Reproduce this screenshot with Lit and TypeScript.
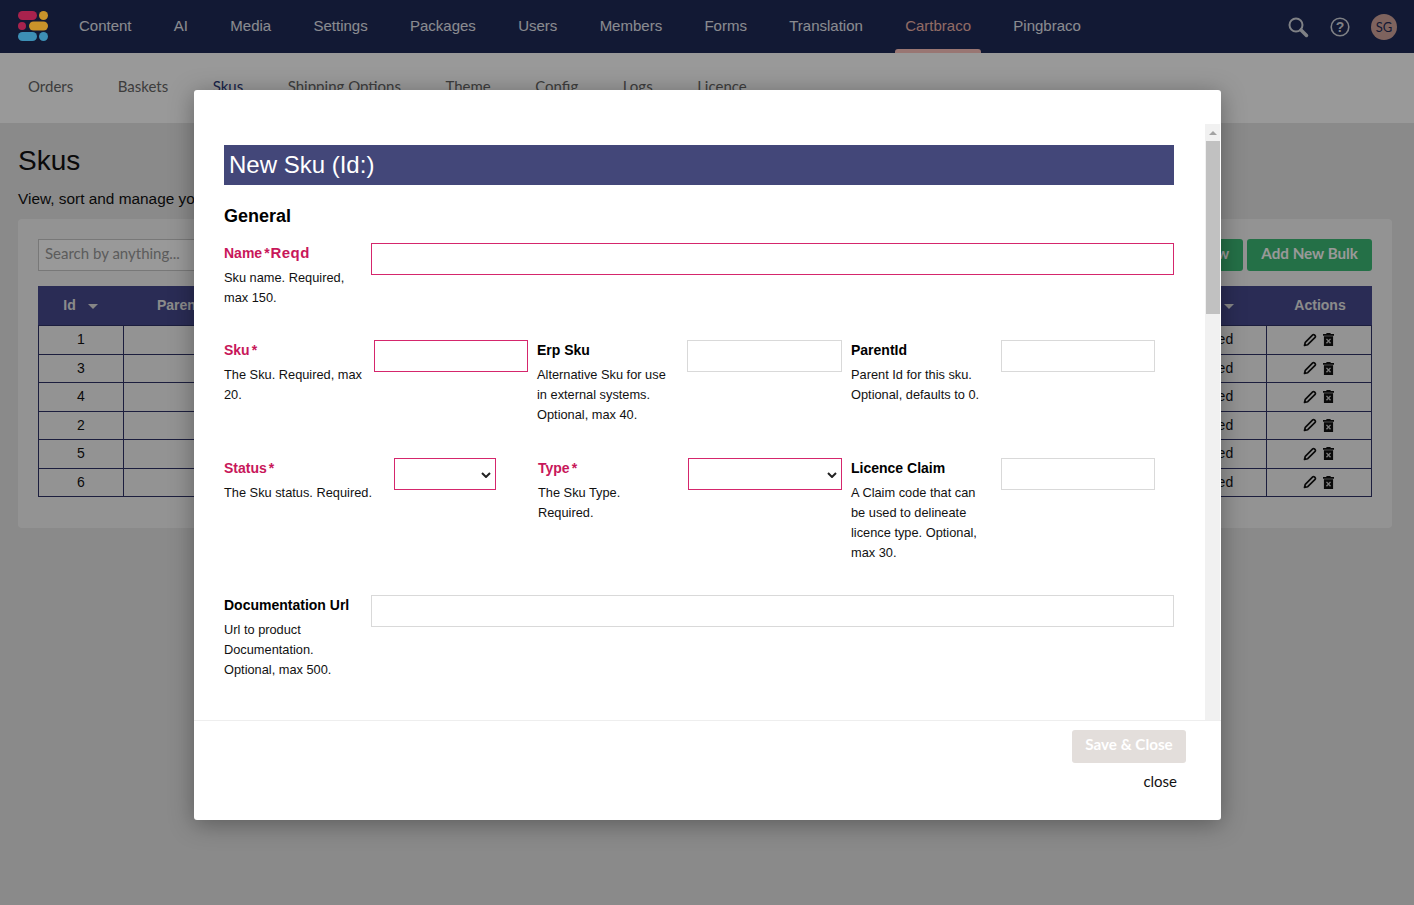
import { LitElement, html, css, svg } from "lit";
import { customElement } from "lit/decorators.js";

const NAV = ["Content","AI","Media","Settings","Packages","Users","Members","Forms","Translation","Cartbraco","Pingbraco"];
const SUB = ["Orders","Baskets","Skus","Shipping Options","Theme","Config","Logs","Licence"];
const IDS = [1,3,4,2,5,6];

const pencil = svg`<svg class="ico" viewBox="0 0 14 14" width="14" height="14"><path d="M1.500 12.500l.8-3.200 7.400-7.400a1.200 1.200 0 0 1 1.700 0l.7.7a1.200 1.200 0 0 1 0 1.700l-7.400 7.400z" fill="none" stroke="#111" stroke-width="1.700" stroke-linejoin="round"/></svg>`;
const trash = svg`<svg class="ico" viewBox="0 0 12 14" width="11" height="13"><path d="M4 0h4l.6 1H12v2H0V1h3.400zM1 3.500h10V14H1z" fill="#111"/><path d="M3.800 6.300l4.400 4.800M8.200 6.300l-4.400 4.800" stroke="#ccc" stroke-width="1.500"/></svg>`;

@customElement("app-root")
export class AppRoot extends LitElement {
  static styles = css`
    :host { display: block; position: relative; width: 1414px; height: 905px; overflow: hidden; background: #e6e6e6; font-family: "Liberation Sans", Arial, sans-serif; color: #111; }
    .topbar { height: 53px; background: #1f2b58; display: flex; align-items: stretch; padding-left: 18px; box-sizing: border-box; }
    .logo { align-self: center; width: 30px; height: 30px; margin: 0 31px 1px 0; position: relative; z-index: 1; }
    .nav { display: flex; gap: 42.300px; flex: 1; }
    .nav a { position: relative; font-size: 15px; line-height: 52px; color: #e6e8f0; }
    .nav a.active { color: #f0b4aa; }
    .nav a.active::after { content: ""; position: absolute; left: -10px; right: -10px; bottom: 0; height: 4px; background: #ffc5c0; border-radius: 3px 3px 0 0; }
    .tools { display: flex; align-items: center; gap: 20px; padding-right: 17px; }
    .avatar { width: 26px; height: 26px; border-radius: 50%; background: #d3a69d; color: #1f2b58; font: 13px/26px "Lato", sans-serif; text-align: center; }
    .subnav { height: 70px; background: #fff; display: flex; gap: 44.500px; align-items: center; padding: 0 0 4px 28px; box-sizing: border-box; font: 15px "Lato", sans-serif; color: #666; }
    .subnav a.active { color: #2b3a7a; }
    .content { padding: 0 22px 0 18px; }
    h1 { margin: 0; padding-top: 23px; font-size: 28px; line-height: 30px; font-weight: 400; }
    .lead { font-size: 15.400px; line-height: 20px; margin: 13px 0 10px; }
    .card { background: #f6f6f6; border-radius: 4px; padding: 20px; height: 309px; box-sizing: border-box; }
    .tools-row { display: flex; gap: 4px; margin-bottom: 15px; }
    .search { flex: 1; height: 32px; box-sizing: border-box; border: 1px solid #c8c8c8; background: #fff; padding: 0 6px; font: 15px/26px "Lato", sans-serif; color: #999; margin-right: 12px; }
    .btn { height: 32px; padding: 0 14px; border-radius: 3px; background: #3dbb77; color: #fff; font: 700 15.200px/29px "Lato", sans-serif; }
    .table { border: 1px solid #2f3368; border-top: 0; }
    .thead, .row { display: grid; grid-template-columns: 85px 1fr 118px 104px; }
    .thead { height: 39px; background: #464a8e; color: #e8e8e8; font-weight: 700; font-size: 14px; line-height: 39px; margin: 0 -1px; }
    .th { text-align: center; display: flex; justify-content: center; align-items: center; gap: 12px; }
    .th.left { justify-content: flex-start; padding-left: 34px; }
    .th.status { justify-content: flex-start; padding-left: 0; gap: 0; }
    .th.status span { width: 74px; }
    .caret { width: 0; height: 0; border: 5px solid transparent; border-top-color: #e0e0e0; border-bottom: 0; margin-top: 2px; }
    .row { height: 28.500px; box-sizing: border-box; border-top: 1px solid #2f3368; font-size: 14px; line-height: 27px; }
    .row:first-of-type { border-top: 0; }
    .td { text-align: center; border-right: 1px solid #2f3368; }
    .td:last-child { border-right: 0; display: flex; justify-content: center; align-items: center; gap: 6px; padding-right: 2px; }
    .ico { display: block; }

    .overlay { position: absolute; inset: 0; background: rgba(0,0,0,.4); }
    .modal { position: absolute; left: 194px; top: 90px; width: 1027px; height: 730px; background: #fff; border-radius: 3px; box-shadow: 0 4px 24px rgba(0,0,0,.35); display: flex; flex-direction: column; }
    .main { height: 596px; margin-top: 34px; display: flex; padding-right: 1px; }
    .body { flex: 1; min-width: 0; overflow: hidden; padding: 21px 31px 0 30px; box-sizing: border-box; }
    .scrollbar { width: 15px; background: #f1f1f1; flex: none; display: flex; flex-direction: column; align-items: center; }
    .arrow { height: 17px; display: flex; align-items: center; justify-content: center; }
    .arrow i { width: 0; height: 0; border: 4px solid transparent; border-bottom-color: #a3a3a3; border-top: 0; }
    .thumb { width: 14px; height: 173px; background: #c1c1c1; }
    .title { height: 40px; background: #434779; color: #fff; font-size: 24px; line-height: 39px; padding-left: 5px; margin: 0; font-weight: 400; }
    h2 { margin: 21px 0 0; font-size: 18px; line-height: 20px; font-weight: 700; color: #000; }
    .f { display: grid; }
    .r1 { grid-template-columns: 147px 803px; margin-top: 17px; }
    .r2 { grid-template-columns: 150px 154px 159px 155px 159px 154px; margin-top: 32px; }
    .r3 { grid-template-columns: 170px 102px 192px 154px 159px 154px; margin-top: 33px; }
    .r4 { grid-template-columns: 147px 803px; margin-top: 32px; }
    .lbl { font-size: 14px; line-height: 20px; font-weight: 700; color: #000; }
    .lbl i { font-style: normal; margin-left: 2px; }
    .lbl b { font-size: 15px; letter-spacing: .4px; margin-left: 1px; }
    .req .lbl { color: #c8175a; }
    .pad { padding-left: 9px; }
    .pad2 { padding-left: 42px; }
    .help { font-size: 12.800px; line-height: 20px; margin-top: 5px; color: #111; }
    .inp { height: 32px; box-sizing: border-box; border: 1px solid #d9d9d9; background: #fff; }
    .inp.bad { border: 1.500px solid #d5266c; }
    .sel { position: relative; }
    .chev { position: absolute; right: 4px; top: 13px; display: block; }
    .footer { flex: 1; border-top: 1px solid #eee; display: flex; flex-direction: column; align-items: flex-end; padding: 9px 35px 0 0; }
    .save { width: 114px; height: 33px; box-sizing: border-box; background: #e3dedb; color: #fff; border-radius: 3px; text-align: center; font: 700 15.200px/29px "Lato", sans-serif; }
    .close { font: 15px/20px "Lato", sans-serif; margin: 8px 9px 0 0; color: #111; }
  `;

  private field(label: unknown, help: string[], cls = "") {
    return html`<div class=${cls}>
      <div class="lbl">${label}</div>
      <div class="help">${help.map((l, i) => html`${i ? html`<br />` : ""}${l}`)}</div>
    </div>`;
  }

  private select() {
    return html`<svg class="chev" viewBox="0 0 10 6" width="10" height="6"><path d="M1 1l4 4 4-4" fill="none" stroke="#222" stroke-width="2"/></svg>`;
  }

  render() {
    return html`
      <header class="topbar">
        <svg class="logo" viewBox="0 0 30 30">
          <rect x="0" y="0" width="19" height="9" rx="4.500" fill="#a8224d"/>
          <circle cx="25.500" cy="4.500" r="4.500" fill="#c8932a"/>
          <circle cx="4" cy="15" r="4" fill="#a8224d"/>
          <rect x="11" y="10.500" width="19" height="9" rx="4.500" fill="#c8932a"/>
          <rect x="0" y="21" width="19" height="9" rx="4.500" fill="#3d8fb5"/>
          <circle cx="25.500" cy="25.500" r="4.500" fill="#3d8fb5"/>
        </svg>
        <nav class="nav">${NAV.map((n) => html`<a class=${n === "Cartbraco" ? "active" : ""}>${n}</a>`)}</nav>
        <div class="tools">
          <svg viewBox="0 0 22 22" width="22" height="22"><circle cx="9" cy="9" r="6.500" fill="none" stroke="#d4d7de" stroke-width="2"/><path d="M14 14l5.500 5.500" stroke="#d4d7de" stroke-width="3.500" stroke-linecap="round"/></svg>
          <svg viewBox="0 0 22 22" width="22" height="22"><circle cx="11" cy="11" r="8.800" fill="none" stroke="#d4d7de" stroke-width="1.600"/><text x="11" y="16" text-anchor="middle" font-family="Liberation Sans" font-weight="700" font-size="14" fill="#d4d7de">?</text></svg>
          <div class="avatar">SG</div>
        </div>
      </header>
      <div class="subnav">${SUB.map((s) => html`<a class=${s === "Skus" ? "active" : ""}>${s}</a>`)}</div>
      <div class="content">
        <h1>Skus</h1>
        <p class="lead">View, sort and manage your skus</p>
        <div class="card">
          <div class="tools-row">
            <div class="search">Search by anything...</div>
            <div class="btn">Add New</div>
            <div class="btn">Add New Bulk</div>
          </div>
          <div class="table">
            <div class="thead">
              <div class="th"><span>Id</span><i class="caret"></i></div>
              <div class="th left"><span>Parent</span></div>
              <div class="th status"><span>Status</span><i class="caret"></i></div>
              <div class="th"><span>Actions</span></div>
            </div>
            ${IDS.map((id) => html`<div class="row">
              <div class="td">${id}</div><div class="td"></div><div class="td">Enabled</div>
              <div class="td">${pencil}${trash}</div>
            </div>`)}
          </div>
        </div>
      </div>
      <div class="overlay"></div>
      <div class="modal">
        <div class="main">
          <div class="body">
            <h3 class="title">New Sku (Id:)</h3>
            <h2>General</h2>
            <div class="f r1 req">
              ${this.field(html`Name<i>*</i><b>Reqd</b>`, ["Sku name. Required,", "max 150."])}
              <div class="inp bad"></div>
            </div>
            <div class="f r2">
              ${this.field(html`Sku<i>*</i>`, ["The Sku. Required, max", "20."], "req")}
              <div class="inp bad"></div>
              ${this.field("Erp Sku", ["Alternative Sku for use", "in external systems.", "Optional, max 40."], "pad")}
              <div class="inp"></div>
              ${this.field("ParentId", ["Parent Id for this sku.", "Optional, defaults to 0."], "pad")}
              <div class="inp"></div>
            </div>
            <div class="f r3">
              ${this.field(html`Status<i>*</i>`, ["The Sku status. Required."], "req")}
              <div class="inp bad sel">${this.select()}</div>
              ${this.field(html`Type<i>*</i>`, ["The Sku Type.", "Required."], "req pad2")}
              <div class="inp bad sel">${this.select()}</div>
              ${this.field("Licence Claim", ["A Claim code that can", "be used to delineate", "licence type. Optional,", "max 30."], "pad")}
              <div class="inp"></div>
            </div>
            <div class="f r4">
              ${this.field("Documentation Url", ["Url to product", "Documentation.", "Optional, max 500."])}
              <div class="inp"></div>
            </div>
          </div>
          <div class="scrollbar"><div class="arrow"><i></i></div><div class="thumb"></div></div>
        </div>
        <div class="footer">
          <div class="save">Save &amp; Close</div>
          <div class="close">close</div>
        </div>
      </div>
    `;
  }
}
